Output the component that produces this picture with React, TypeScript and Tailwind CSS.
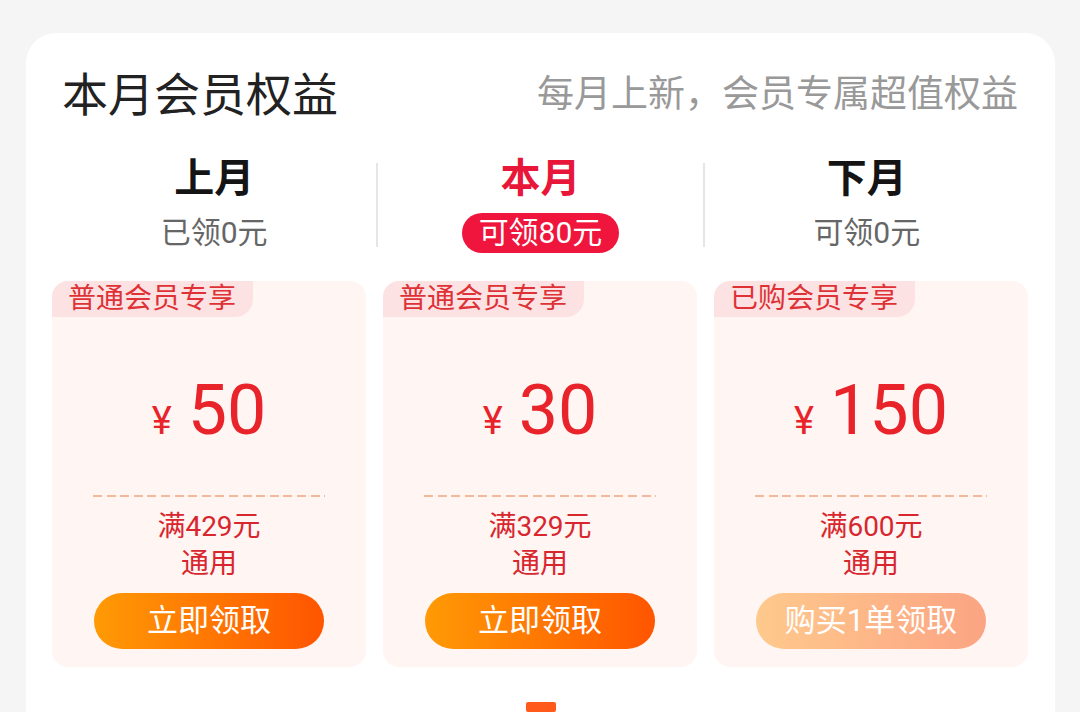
import React from 'react';

const FONT = "font-['Roboto','Noto_Sans_CJK_SC',sans-serif]";

interface Coupon {
  tag: string;
  amount: string;
  threshold: string;
  action: string;
  disabled?: boolean;
}

const coupons: Coupon[] = [
  { tag: '普通会员专享', amount: '50', threshold: '满429元', action: '立即领取' },
  { tag: '普通会员专享', amount: '30', threshold: '满329元', action: '立即领取' },
  { tag: '已购会员专享', amount: '150', threshold: '满600元', action: '购买1单领取', disabled: true },
];

const MonthTab: React.FC<{ title: string; sub: string; active?: boolean }> = ({ title, sub, active }) => (
  <div className="flex-1 flex flex-col items-center">
    <div className={`h-[44px] leading-[44px] text-[40px] font-bold ${active ? 'text-[#e8173a]' : 'text-[#141414]'}`}>
      {title}
    </div>
    <div className="mt-[12px] h-[40px] flex items-center">
      {active ? (
        <span className="h-[40px] px-[17px] rounded-full bg-[#f0153c] text-white text-[30px] leading-[40px]">{sub}</span>
      ) : (
        <span className="text-[#666666] text-[30px] leading-[40px]">{sub}</span>
      )}
    </div>
  </div>
);

const CouponCard: React.FC<{ c: Coupon }> = ({ c }) => (
  <div className="h-[386px] bg-[#fff5f2] rounded-[16px] flex flex-col items-center overflow-hidden">
    <div className="self-start h-[36px] pl-[16px] pr-[17px] bg-[#fde2e3] rounded-br-[18px] text-[#de3236] text-[28px] leading-[36px]">
      {c.tag}
    </div>
    <div className="mt-[53px] h-[80px] flex items-baseline text-[#e8232a]">
      <span className="text-[38px] leading-[80px]">¥</span>
      <span className="ml-[16px] text-[70px] leading-[80px]">{c.amount}</span>
    </div>
    <div className="mt-[45px] w-[232px] h-[2px] bg-[repeating-linear-gradient(to_right,#f4b99b_0_9px,transparent_9px_13.6px)]" />
    <div className="mt-[11px] text-center text-[#d8262e] text-[28px] leading-[37px]">
      <div>{c.threshold}</div>
      <div>通用</div>
    </div>
    <button
      className={`mt-[11px] w-[230px] h-[56px] rounded-full text-white text-[31px] leading-[56px] ${
        c.disabled
          ? 'bg-[linear-gradient(to_right,#ffc98c,#fba483)]'
          : 'bg-[linear-gradient(to_right,#ff9a05,#ff5500)]'
      }`}
    >
      {c.action}
    </button>
  </div>
);

const App: React.FC = () => {
  return (
    <div className={`w-[1080px] h-[712px] overflow-hidden bg-[#f5f5f5] pt-[33px] pl-[26px] pr-[25px] ${FONT}`}>
      <div className="h-[700px] bg-white rounded-t-[30px] flex flex-col">
        <div className="h-[124px] flex items-center justify-between pl-[36px] pr-[37px]">
          <h1 className="text-[46px] text-[#222222]">本月会员权益</h1>
          <p className="text-[37px] text-[#999999]">每月上新，会员专属超值权益</p>
        </div>

        <div className="flex items-center px-[26px]">
          <MonthTab title="上月" sub="已领0元" />
          <div className="w-[2px] h-[84px] bg-[#e6e6e6]" />
          <MonthTab title="本月" sub="可领80元" active />
          <div className="w-[2px] h-[84px] bg-[#e6e6e6]" />
          <MonthTab title="下月" sub="可领0元" />
        </div>

        <div className="mt-[28px] grid grid-cols-3 gap-[17px] pl-[26px] pr-[27px]">
          {coupons.map((c, i) => (
            <CouponCard key={i} c={c} />
          ))}
        </div>

        <div className="mt-[35px] mx-auto w-[30px] h-[10px] bg-[#ff5a1a] rounded-[2px]" />
      </div>
    </div>
  );
};

export default App;
